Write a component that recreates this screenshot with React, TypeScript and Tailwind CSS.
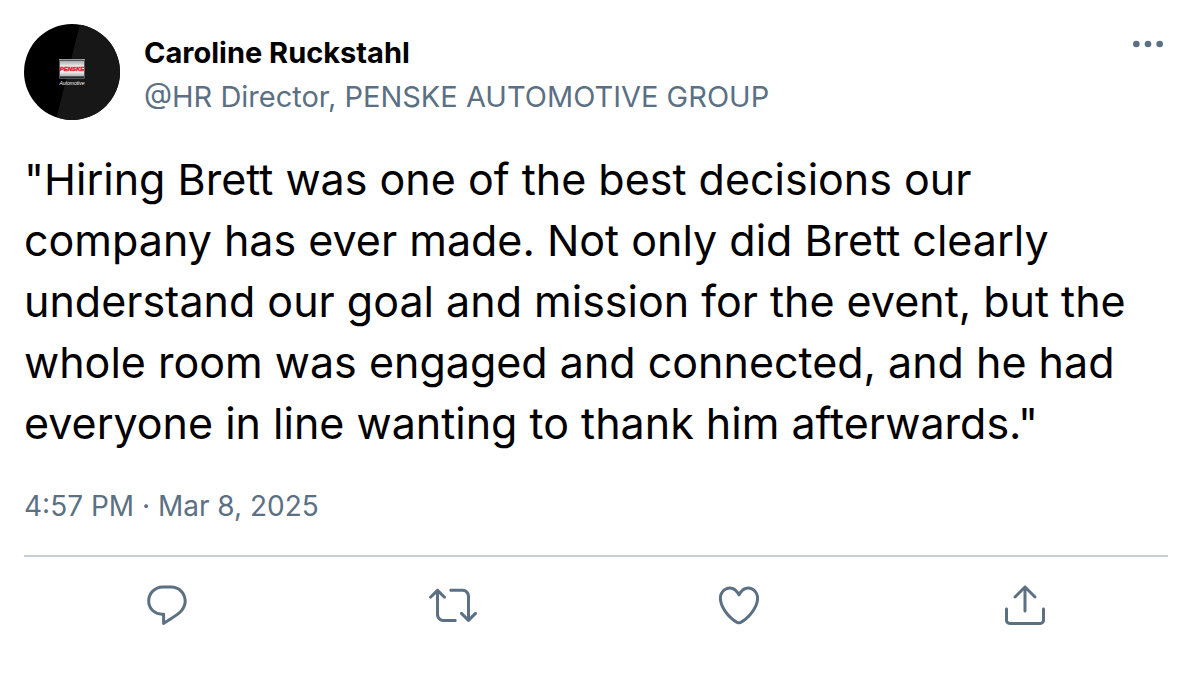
import React from 'react'

const lines = [
    '"Hiring Brett was one of the best decisions our',
    'company has ever made. Not only did Brett clearly',
    'understand our goal and mission for the event, but the',
    'whole room was engaged and connected, and he had',
    'everyone in line wanting to thank him afterwards."',
]

const actions = [
    {
        label: 'Reply',
        path: 'M14.046 2.242l-4.148-.01h-.002c-4.374 0-7.8 3.427-7.8 7.802 0 4.098 3.186 7.206 7.465 7.37v3.828c0 .108.044.286.12.403.142.225.384.347.632.347.138 0 .277-.038.402-.118.264-.168 6.473-4.14 8.088-5.506 1.902-1.61 3.04-3.97 3.043-6.312v-.017c-.006-4.367-3.43-7.787-7.8-7.788zm3.787 12.972c-1.134.96-4.862 3.405-6.772 4.643V16.67c0-.414-.335-.75-.75-.75h-.396c-3.66 0-6.318-2.476-6.318-5.886 0-3.534 2.768-6.302 6.3-6.302l4.147.01h.002c3.532 0 6.3 2.766 6.302 6.296-.003 1.91-.942 3.844-2.514 5.176z',
    },
    {
        label: 'Retweet',
        path: 'M23.77 15.67c-.292-.293-.767-.293-1.06 0l-2.22 2.22V7.65c0-2.068-1.683-3.75-3.75-3.75h-5.85c-.414 0-.75.336-.75.75s.336.75.75.75h5.85c1.24 0 2.25 1.01 2.25 2.25v10.24l-2.22-2.22c-.293-.293-.768-.293-1.06 0s-.294.768 0 1.06l3.5 3.5c.145.147.337.22.53.22s.383-.072.53-.22l3.5-3.5c.294-.292.294-.767 0-1.06zm-10.66 3.28H7.26c-1.24 0-2.25-1.01-2.25-2.25V6.46l2.22 2.22c.148.147.34.22.532.22s.384-.073.53-.22c.293-.293.293-.768 0-1.06l-3.5-3.5c-.293-.294-.768-.294-1.06 0l-3.5 3.5c-.294.292-.294.767 0 1.06s.767.293 1.06 0l2.22-2.22V16.7c0 2.068 1.683 3.75 3.75 3.75h5.85c.414 0 .75-.336.75-.75s-.337-.75-.75-.75z',
    },
    {
        label: 'Like',
        path: 'M12 21.638h-.014C9.403 21.59 1.95 14.856 1.95 8.478c0-3.064 2.525-5.754 5.403-5.754 2.29 0 3.83 1.58 4.646 2.73.814-1.148 2.354-2.73 4.645-2.73 2.88 0 5.404 2.69 5.404 5.755 0 6.376-7.454 13.11-10.037 13.157H12zM7.354 4.225c-2.08 0-3.903 1.988-3.903 4.255 0 5.74 7.034 11.596 8.55 11.658 1.518-.062 8.55-5.917 8.55-11.658 0-2.267-1.823-4.255-3.903-4.255-2.528 0-3.94 2.936-3.952 2.965-.23.562-1.156.562-1.387 0-.014-.03-1.425-2.965-3.954-2.965z',
    },
    {
        label: 'Share',
        path: 'M17.53 7.47l-5-5c-.293-.293-.768-.293-1.06 0l-5 5c-.294.293-.294.768 0 1.06s.767.294 1.06 0l3.72-3.72V15c0 .414.336.75.75.75s.75-.336.75-.75V4.81l3.72 3.72c.146.147.338.22.53.22s.384-.072.53-.22c.293-.293.293-.767 0-1.06zM19.708 21.944H4.292C3.028 21.944 2 20.916 2 19.652V14c0-.414.336-.75.75-.75s.75.336.75.75v5.652c0 .437.355.792.792.792h15.416c.437 0 .792-.355.792-.792V14c0-.414.336-.75.75-.75s.75.336.75.75v5.652c0 1.264-1.028 2.292-2.292 2.292z',
    },
]

const Avatar = () => (
    <svg viewBox="0 0 96 96" className="size-24 shrink-0 rounded-full" role="img" aria-label="Penske Automotive">
        <defs>
            <linearGradient id="plate" x1="0" y1="0" x2="0" y2="1">
                <stop offset="0" stopColor="#a9aaad" />
                <stop offset="0.3" stopColor="#e4e4e6" />
                <stop offset="0.7" stopColor="#f4f4f4" />
                <stop offset="1" stopColor="#b2b3b6" />
            </linearGradient>
        </defs>
        <rect width="96" height="96" fill="#000" />
        <path d="M56 0H96V96H32Z" fill="#171717" />
        <rect x="35" y="35" width="26" height="20" rx="1" fill="#55565c" />
        <rect x="36" y="37" width="24" height="15" fill="url(#plate)" />
        <rect x="35" y="35" width="26" height="1" fill="#9a9a9e" />
        <rect x="36" y="53" width="24" height="1" fill="#25252b" />
        <text x="48" y="47" textAnchor="middle" fontFamily="Liberation Sans, sans-serif" fontSize="6" fontWeight="700" fontStyle="italic" fill="#f0142d" stroke="#f0142d" strokeWidth="0.4">PENSKE</text>
        <text x="48" y="61" textAnchor="middle" fontFamily="Liberation Sans, sans-serif" fontSize="5" fontStyle="italic" fill="#fff">Automotive</text>
    </svg>
)

const App = () => {
    return (
        <article className="bg-white p-6 font-['Inter',sans-serif] text-black">
            <header className="flex items-start gap-6">
                <Avatar />
                <div className="flex-1 pt-2">
                    <h1 className="text-[29px] leading-[42px] font-bold">Caroline Ruckstahl</h1>
                    <p className="text-[29px] leading-[46px] text-[#5b7083]">@HR Director, PENSKE AUTOMOTIVE GROUP</p>
                </div>
                <button type="button" aria-label="More" className="text-[#5b7083]">
                    <svg viewBox="0 0 24 24" className="size-10" fill="currentColor">
                        <circle cx="5" cy="12" r="2" />
                        <circle cx="12" cy="12" r="2" />
                        <circle cx="19" cy="12" r="2" />
                    </svg>
                </button>
            </header>

            <p className="pt-[29px] text-[43px] leading-[61px]">
                {lines.map((line) => (
                    <span key={line} className="block whitespace-nowrap">{line}</span>
                ))}
            </p>

            <p className="pt-8 text-[28px] leading-10 text-[#5b7083]">
                <time dateTime="2025-03-08T16:57">4:57 PM · Mar 8, 2025</time>
            </p>

            <div className="mt-[29px] grid grid-cols-4 justify-items-center border-t-2 border-[#c4cfd6] pt-6 text-[#5b7083]">
                {actions.map((action) => (
                    <button key={action.label} type="button" aria-label={action.label}>
                        <svg viewBox="0 0 24 24" className="size-12" fill="currentColor">
                            <path d={action.path} />
                        </svg>
                    </button>
                ))}
            </div>
        </article>
    )
}

export default App
